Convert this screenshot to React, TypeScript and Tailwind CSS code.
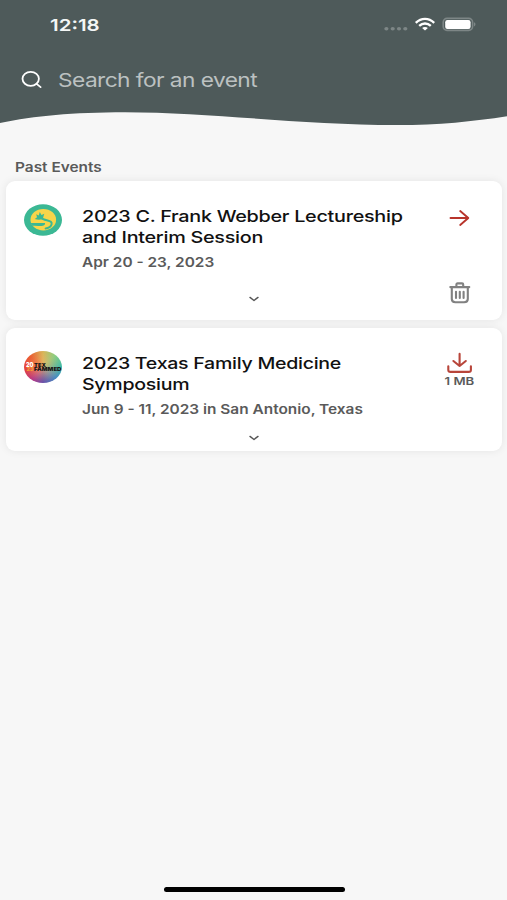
import React from 'react';

interface EventItem {
  id: string;
  title: string[];
  date: string;
  logo: React.ReactNode;
  size?: string;
}

const WideText: React.FC<{ className?: string; children: React.ReactNode }> = ({ className = '', children }) => (
  <span className={`block w-max origin-left whitespace-nowrap ${className}`}>{children}</span>
);

const StatusBar: React.FC = () => (
  <div className="flex h-12 items-center justify-between pl-[50px] pr-[31px]">
    <WideText className="mt-0.5 scale-x-[1.24] text-[16.5px] leading-6 font-semibold text-[#f4f6f6]">12:18</WideText>
    <svg width="92" height="16" viewBox="0 0 92 16">
      <g fill="#7d8686">
        <ellipse cx="2.4" cy="12.7" rx="2.1" ry="1.7" />
        <ellipse cx="8.7" cy="12.7" rx="2.1" ry="1.7" />
        <ellipse cx="15" cy="12.7" rx="2.1" ry="1.7" />
        <ellipse cx="21.3" cy="12.7" rx="2.1" ry="1.7" />
      </g>
      <g fill="none" stroke="#fff" strokeWidth="2.3">
        <path d="M31.8 6.9C37.2 1.5 44.8 1.5 50.2 6.9" />
        <path d="M35.2 9.9c3.4-3.2 8.2-3.2 11.6 0" />
      </g>
      <path d="M38.1 12c1.6-1.5 4.2-1.5 5.8 0L41 14.6z" fill="#fff" />
      <rect x="59.2" y="2.4" width="29.4" height="12" rx="3.8" fill="none" stroke="#7d8686" strokeWidth="1.6" />
      <rect x="61.2" y="4" width="25.4" height="8.9" rx="2.2" fill="#fff" />
      <path d="M90 6.3c2 .7 2 3.4 0 4.1z" fill="#7d8686" />
    </svg>
  </div>
);

const Header: React.FC = () => (
  <header>
    <div className="h-[111px] bg-[#4e5a5a]">
      <StatusBar />
      <div className="flex h-16 items-center pl-[21px]">
        <svg width="22" height="20" viewBox="0 0 22 20" fill="none" stroke="#fff" strokeWidth="1.8" strokeLinecap="round">
          <ellipse cx="9.7" cy="8.8" rx="8.2" ry="7" />
          <path d="M15.6 13.9l4 3.2" />
        </svg>
        <WideText className="mt-0.5 ml-[15px] scale-x-[1.195] text-[19px] leading-6 tracking-[-0.47px] text-[#bcc1c1]">Search for an event</WideText>
      </div>
    </div>
    <svg className="block" width="507" height="16" viewBox="0 0 507 16">
      <path d="M0 0H507V5.2C473 10.5 439 14 397 14C300 14 210 1.3 125 1.3C72 1.3 35 5 0 12z" fill="#4e5a5a" />
    </svg>
  </header>
);

const WebberLogo: React.FC = () => (
  <svg width="38" height="32" viewBox="0 0 38 32">
    <ellipse cx="19" cy="16" rx="19" ry="15.8" fill="#3bb894" />
    <ellipse cx="19.3" cy="15.7" rx="12.8" ry="10.8" fill="#f8d54a" />
    <path d="M10.8 15l2.2-1.8-.8-3 2.5 1.4 1.1-3.5 1.7 3 2.8-1.4-1 3.3c-.3 1.1-.5 1.6-1.2 2.3-2.3.6-4.6.6-7.3-.3z" fill="#3bb894" />
    <path
      d="M17.2 13.6c1.4 2 4 2.3 6.4 2.8 2.9.6 4.5 1.8 4 3.8-.5 2.1-2.8 3.6-6 4.3"
      fill="none"
      stroke="#3bb894"
      strokeWidth="2"
      strokeLinecap="round"
    />
    <path d="M6.5 19h14.6c0 2.2-1.3 3-3.8 3-2.7 0-5.3-.5-9-.2z" fill="#3bb894" />
  </svg>
);

const FammedLogo: React.FC = () => (
  <div className="relative h-8 w-[38px] overflow-hidden rounded-[50%] bg-[conic-gradient(from_0deg,#d9b558,#8fce80_45deg,#3fb9a8_90deg,#4b8bc0_130deg,#6b52a8_180deg,#b83b87_220deg,#e6413c_265deg,#ea5f32_310deg,#d9b558)]">
    <div className="absolute inset-0 bg-[radial-gradient(ellipse,#f0b066cc_0%,#f0b06600_65%)]" />
    <svg className="absolute inset-0" width="38" height="32" viewBox="0 0 38 32" fontFamily="Inter, sans-serif" fontWeight="900">
      <text x="2" y="15.9" fontSize="6" fill="#fff" textLength="7.5" lengthAdjust="spacingAndGlyphs">20</text>
      <text x="2.5" y="20.4" fontSize="5.3" fill="#f29a37" textLength="7" lengthAdjust="spacingAndGlyphs">23</text>
      <text x="10" y="15.8" fontSize="5.2" fill="#161616" textLength="12" lengthAdjust="spacingAndGlyphs">TEX</text>
      <text x="10" y="20.3" fontSize="5.2" fill="#161616" textLength="27.5" lengthAdjust="spacingAndGlyphs">FAMMED</text>
    </svg>
  </div>
);

const ArrowIcon: React.FC = () => (
  <svg width="22" height="18" viewBox="0 0 22 18" fill="none" stroke="#b8342b" strokeWidth="1.9" strokeLinecap="round" strokeLinejoin="round">
    <path d="M1.5 9h17.5M11.2 2L19.3 9l-8.1 7" />
  </svg>
);

const TrashIcon: React.FC = () => (
  <svg width="22" height="22" viewBox="0 0 22 22" fill="none" stroke="#818181" strokeWidth="2.1" strokeLinecap="round" strokeLinejoin="round">
    <path d="M1.3 5.1h19" />
    <path d="M7.4 5V2.5c0-.7.4-1.1 1.1-1.1h4.6c.7 0 1.1.4 1.1 1.1V5" />
    <path d="M2.8 5.5v11.6c0 2 1.4 3.2 3.6 3.2h8.8c2.2 0 3.6-1.2 3.6-3.2V5.5" />
    <path d="M7 9.8v6.2M10.8 9.8v6.2M14.6 9.8v6.2" />
  </svg>
);

const DownloadIcon: React.FC = () => (
  <svg width="26" height="22" viewBox="0 0 26 22" fill="none" stroke="#b8453a" strokeWidth="2.1" strokeLinecap="round" strokeLinejoin="round">
    <path d="M12.6 1.9v12M6.4 9l6.2 5 6.2-5" />
    <path d="M1.3 14.2V18c0 1.2.9 1.9 2.2 1.9h18.2c1.3 0 2.2-.7 2.2-1.9v-3.8" />
  </svg>
);

const ChevronIcon: React.FC = () => (
  <svg width="12" height="8" viewBox="0 0 12 8" fill="none" stroke="#555" strokeWidth="1.4" strokeLinecap="round" strokeLinejoin="round">
    <path d="M2 2.4l4 3.1 4-3.1" />
  </svg>
);

const events: EventItem[] = [
  {
    id: 'webber',
    title: ['2023 C. Frank Webber Lectureship', 'and Interim Session'],
    date: 'Apr 20 - 23, 2023',
    logo: <WebberLogo />,
  },
  {
    id: 'symposium',
    title: ['2023 Texas Family Medicine', 'Symposium'],
    date: 'Jun 9 - 11, 2023 in San Antonio, Texas',
    logo: <FammedLogo />,
    size: '1 MB',
  },
];

const EventCard: React.FC<{ event: EventItem }> = ({ event }) => (
  <article
    className={`flex flex-col justify-between rounded-[9px] bg-white pt-6 shadow-[0_0_8px_rgba(0,0,0,0.08)] ${
      event.size ? 'h-[123px] pb-[9px]' : 'h-[139px] pb-[17px]'
    }`}
  >
    <div className="flex h-0 items-start">
      <div className="-mt-px ml-[18.5px] w-[57.5px] shrink-0">{event.logo}</div>
      <div className="min-w-0 flex-1 pt-px">
        <h2 className="text-[16.5px] leading-[21px] font-medium tracking-[-0.24px] text-[#111]">
          {event.title.map(line => (
            <WideText key={line} className={event.size ? 'scale-x-[1.187]' : 'scale-x-[1.2]'}>{line}</WideText>
          ))}
        </h2>
        <p className="mt-[5px] text-[13px] leading-[18px] font-semibold text-[#5a5a5a]">
          <WideText className="scale-x-[1.185]">{event.date}</WideText>
        </p>
      </div>
      <div className="flex w-[84px] shrink-0 flex-col items-center">
        {event.size ? (
          <>
            <DownloadIcon />
            <span className="mt-px scale-x-[1.2] text-[11px] leading-3 font-semibold text-[#5a5a5a]">{event.size}</span>
          </>
        ) : (
          <>
            <button className="mt-1"><ArrowIcon /></button>
            <button className="mt-[55px]"><TrashIcon /></button>
          </>
        )}
      </div>
    </div>
    <div className="flex justify-center">
      <ChevronIcon />
    </div>
  </article>
);

export default function App() {
  return (
    <div className="flex h-[900px] w-[507px] flex-col overflow-hidden bg-[#f7f7f7] font-['Inter',sans-serif]">
      <Header />
      <main className="flex-1 px-[5.5px] pt-[30.5px]">
        <h1 className="pl-[9.5px] text-[13px] leading-[18px] font-semibold text-[#5a5a5a]">
          <WideText className="scale-x-[1.185]">Past Events</WideText>
        </h1>
        <div className="mt-[5.5px] flex flex-col gap-2">
          {events.map(event => (
            <EventCard key={event.id} event={event} />
          ))}
        </div>
      </main>
      <footer className="flex justify-center pb-2 pl-px">
        <div className="h-[5px] w-[181px] rounded-full bg-black" />
      </footer>
    </div>
  );
}
